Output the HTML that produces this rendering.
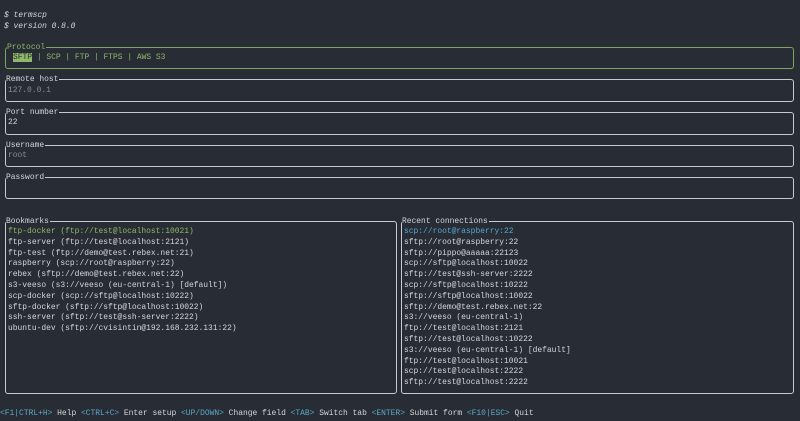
<!DOCTYPE html>
<html><head><meta charset="utf-8"><style>
html,body{margin:0;padding:0;background:#282c34;width:800px;height:421px;overflow:hidden}
body{position:relative;font-family:"Liberation Mono","DejaVu Sans Mono",monospace;font-size:7.95px;color:#d4d6da}
.t{position:absolute;white-space:pre;line-height:10.8px}
.b{position:absolute;border:1px solid #c8cacf;border-radius:3px;box-sizing:border-box}
.g{border-color:#7ea45e}
.lab{position:absolute;top:-5px;left:0;background:#282c34;line-height:9px;white-space:pre;padding-right:1px}
.gr{color:#8fb86a}.cy{color:#53a8d6}.dim{color:#8a8d93}
.hl{background:#8fb86a;color:#282c34}
.k{color:#5aa9c8}
</style></head><body>
<div class="t" style="left:4px;top:11px;font-style:italic">$ termscp
$ version 0.8.0</div>

<div class="b g" style="left:5px;top:47px;width:789px;height:22px"><span class="lab gr" style="left:1px">Protocol</span></div>
<div class="t gr" style="left:13px;top:53px"><span class="hl">SFTP</span> | SCP | FTP | FTPS | AWS S3</div>

<div class="b" style="left:5px;top:79px;width:789px;height:23px"><span class="lab">Remote host</span></div>
<div class="t dim" style="left:8px;top:86px">127.0.0.1</div>

<div class="b" style="left:5px;top:112px;width:789px;height:23px"><span class="lab">Port number</span></div>
<div class="t" style="left:8px;top:118px">22</div>

<div class="b" style="left:5px;top:145px;width:789px;height:22px"><span class="lab">Username</span></div>
<div class="t dim" style="left:8px;top:151px">root</div>

<div class="b" style="left:5px;top:177px;width:789px;height:22px"><span class="lab">Password</span></div>

<div class="b" style="left:5px;top:221px;width:392px;height:173px"><span class="lab">Bookmarks</span></div>
<div class="t" style="left:8px;top:227px"><span class="gr">ftp-docker (ftp://test@localhost:10021)</span>
ftp-server (ftp://test@localhost:2121)
ftp-test (ftp://demo@test.rebex.net:21)
raspberry (scp://root@raspberry:22)
rebex (sftp://demo@test.rebex.net:22)
s3-veeso (s3://veeso (eu-central-1) [default])
scp-docker (scp://sftp@localhost:10222)
sftp-docker (sftp://sftp@localhost:10022)
ssh-server (sftp://test@ssh-server:2222)
ubuntu-dev (sftp://cvisintin@192.168.232.131:22)</div>

<div class="b" style="left:401px;top:221px;width:393px;height:173px"><span class="lab">Recent connections</span></div>
<div class="t" style="left:404px;top:227px"><span class="cy">scp://root@raspberry:22</span>
sftp://root@raspberry:22
sftp://pippo@aaaaa:22123
scp://sftp@localhost:10022
sftp://test@ssh-server:2222
scp://sftp@localhost:10222
sftp://sftp@localhost:10022
sftp://demo@test.rebex.net:22
s3://veeso (eu-central-1)
ftp://test@localhost:2121
sftp://test@localhost:10222
s3://veeso (eu-central-1) [default]
ftp://test@localhost:10021
scp://test@localhost:2222
sftp://test@localhost:2222</div>

<div class="t" style="left:0px;top:409px"><span class="k">&lt;F1|CTRL+H&gt;</span> Help <span class="k">&lt;CTRL+C&gt;</span> Enter setup <span class="k">&lt;UP/DOWN&gt;</span> Change field <span class="k">&lt;TAB&gt;</span> Switch tab <span class="k">&lt;ENTER&gt;</span> Submit form <span class="k">&lt;F10|ESC&gt;</span> Quit</div>
</body></html>
